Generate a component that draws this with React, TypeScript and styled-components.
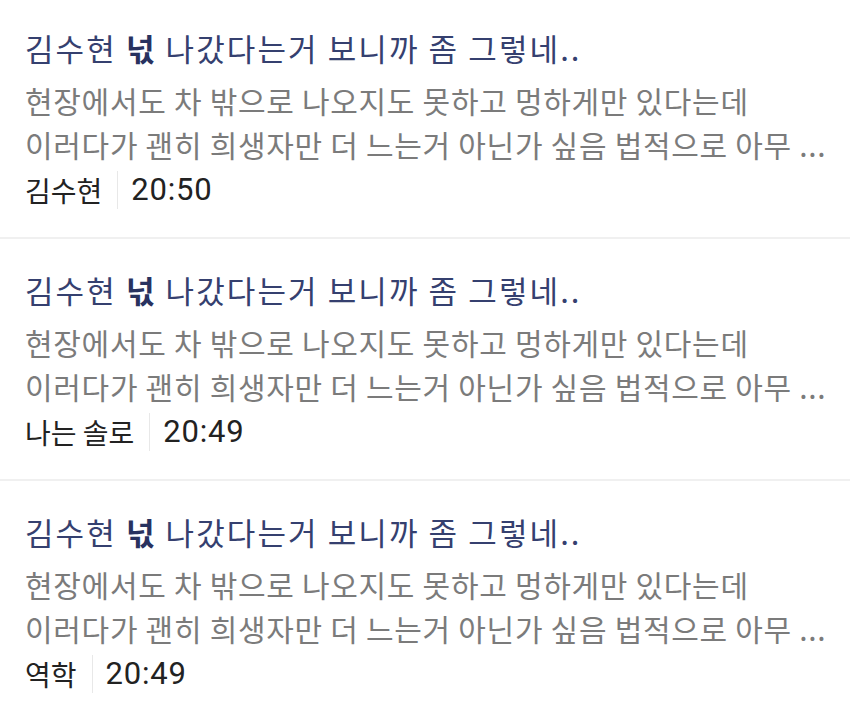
import { FC } from 'react';
import styled, { createGlobalStyle } from 'styled-components';

type Post = {
  id: number;
  author: string;
  time: string;
};

const posts: Post[] = [
  { id: 1, author: '김수현', time: '20:50' },
  { id: 2, author: '나는 솔로', time: '20:49' },
  { id: 3, author: '역학', time: '20:49' }
];

const GlobalStyle = createGlobalStyle`
  body {
    margin: 0;
    background: #ffffff;
    font-family: 'Noto Sans CJK KR', 'Noto Sans', sans-serif;
  }
`;

const PostItem: FC<{ post: Post }> = props => {
  const { post } = props;
  return (
    <StyledItem>
      <Title>
        김수현 <strong>넋</strong> 나갔다는거 보니까 좀 그렇네..
      </Title>
      <Summary>
        현장에서도 차 밖으로 나오지도 못하고 멍하게만 있다는데
        <br />
        이러다가 괜히 희생자만 더 느는거 아닌가 싶음 법적으로 아무 ...
      </Summary>
      <Meta>
        <span className="author">{post.author}</span>
        <span className="time">{post.time}</span>
      </Meta>
    </StyledItem>
  );
};

const StyledItem = styled.li`
  padding: 29px 25px 25px;
  border-bottom: 2px solid #f0f0f0;
`;

const Title = styled.div`
  font-size: 31px;
  line-height: 44px;
  letter-spacing: 2.1px;
  color: #35406f;
  margin-bottom: 8px;
  white-space: nowrap;
  strong {
    font-weight: 700;
    color: #28325f;
  }
`;

const Summary = styled.div`
  font-size: 30px;
  line-height: 44px;
  letter-spacing: 0.7px;
  color: #7b7b7b;
  white-space: nowrap;
  margin-bottom: 2px;
`;

const Meta = styled.div`
  display: flex;
  align-items: center;
  font-size: 28px;
  line-height: 44px;
  color: #222222;
  .author {
    padding-right: 15px;
    border-right: 1px solid #e8e8e8;
    line-height: 38px;
  }
  .time {
    padding-left: 13px;
    font-family: Roboto, 'Noto Sans CJK KR', sans-serif;
    font-size: 31px;
    letter-spacing: 0.8px;
  }
`;

const PostList = styled.ul`
  list-style: none;
  margin: -3px 0 0;
  padding: 0;
`;

const App: FC = () => {
  return (
    <>
      <GlobalStyle />
      <PostList>
        {posts.map(post => (
          <PostItem key={post.id} post={post} />
        ))}
      </PostList>
    </>
  );
};

export default App;
